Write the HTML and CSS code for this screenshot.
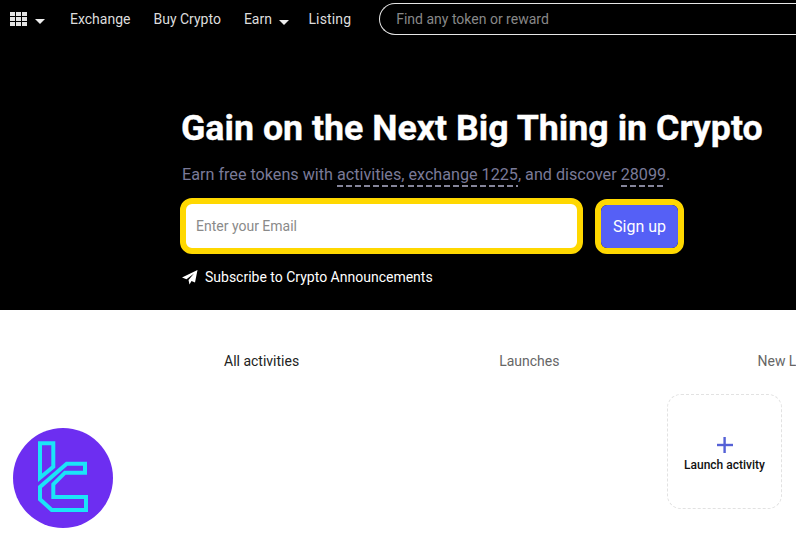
FILE: index.html
```html
<!DOCTYPE html>
<html lang="en">
<head>
    <meta charset="UTF-8">
    <meta name="viewport" content="width=device-width, initial-scale=1.0">
    <title>Gain on the Next Big Thing in Crypto</title>
    <link rel="stylesheet" href="styles.css">
</head>
<body>
    <div class="top">
        <nav class="nav">
            <div class="apps">
                <svg class="apps-icon" width="17" height="14" viewBox="0 0 17 14" fill="#e4e4e4">
                    <rect x="0" y="0" width="5" height="4"/><rect x="6" y="0" width="5" height="4"/><rect x="12" y="0" width="5" height="4"/>
                    <rect x="0" y="5" width="5" height="4"/><rect x="6" y="5" width="5" height="4"/><rect x="12" y="5" width="5" height="4"/>
                    <rect x="0" y="10" width="5" height="4"/><rect x="6" y="10" width="5" height="4"/><rect x="12" y="10" width="5" height="4"/>
                </svg>
                <span class="caret"></span>
            </div>
            <a class="nav-link nav-exchange">Exchange</a>
            <a class="nav-link nav-buy">Buy Crypto</a>
            <a class="nav-link nav-earn">Earn <span class="caret"></span></a>
            <a class="nav-link nav-listing">Listing</a>
            <div class="search">Find any token or reward</div>
        </nav>

        <section class="hero">
            <h1>Gain on the Next Big Thing in Crypto</h1>
            <p class="sub">Earn free tokens with <span class="dash">activities,</span> <span class="dash">exchange 1225</span>, and discover <span class="dash">28099</span>.</p>
            <form class="signup">
                <div class="email-box"><input class="email" type="text" placeholder="Enter your Email"></div>
                <div class="btn-box"><button class="btn" type="button">Sign up</button></div>
            </form>
            <div class="subscribe">
                <svg width="17" height="15" viewBox="0 0 17 15" fill="#fff">
                    <path d="M0 7.5 15.5 0 13 12.5 9.5 11 7.5 14.5 6.5 10 12 3.5 4.5 9.3Z"/>
                </svg>
                <span>Subscribe to Crypto Announcements</span>
            </div>
        </section>
    </div>

    <section class="main">
        <div class="tabs">
            <span class="tab tab-on">All activities</span>
            <span class="tab tab-launch">Launches</span>
            <span class="tab">New Listings</span>
        </div>
        <div class="card-row">
            <div class="launch-card">
                <svg width="16" height="16" viewBox="0 0 16 16" fill="#5561d6">
                    <rect x="6.4" y="0" width="2.4" height="16"/><rect x="0" y="6.8" width="16" height="2.4"/>
                </svg>
                <span>Launch activity</span>
            </div>
        </div>
    </section>

    <!-- watermark over page -->
    <div class="badge">
        <svg width="100" height="100" viewBox="0 0 100 100">
            <circle cx="50" cy="50" r="50" fill="#6d2ef1"/>
            <g fill="none" stroke="#1be4f8" stroke-width="4">
                <path d="M27 49.7V15.3H40.3V38.7Z"/>
                <path d="M72 35.7H53.7L27 59V71.3L38.7 82H73V69H40.3V56.3L52 44.7H72Z"/>
            </g>
        </svg>
    </div>
</body>
</html>
```

FILE: styles.css
```css
* {
    box-sizing: border-box;
}
html, body {
    height: 100%;
}
body {
    margin: 0;
    width: 796px;
    height: 540px;
    overflow: hidden;
    position: relative;
    font-family: Roboto, 'Liberation Sans', sans-serif;
    background: #fff;
}
.top {
    background: #000;
    color: #fff;
    height: 310px;
}
.nav {
    display: flex;
    align-items: center;
    height: 38px;
    padding-left: 10px;
    font-size: 14px;
    color: #ddd;
}
.apps {
    display: flex;
    align-items: center;
    margin-right: 25px;
}
.apps-icon {
    margin-right: 8px;
}
.caret {
    display: inline-block;
    width: 0;
    height: 0;
    margin-top: 5px;
    border-left: 5px solid transparent;
    border-right: 5px solid transparent;
    border-top: 5px solid #eee;
    vertical-align: middle;
}
.nav-link {
    margin-right: 23px;
    white-space: nowrap;
}
.nav-earn {
    margin-right: 19px;
}
.nav-earn .caret {
    margin-left: 4px;
}
.nav-listing {
    margin-right: 28px;
    letter-spacing: 0.15px;
}
.search {
    width: 440px;
    height: 32px;
    padding-left: 16px;
    line-height: 30px;
    border: 1px solid #e6e6e6;
    border-radius: 16px 0 0 16px;
    border-right: none;
    color: #888;
    flex: none;
}
.hero {
    padding: 70px 0 0 182px;
}
h1 {
    margin: 0 0 0 -1px;
    font-size: 35.75px;
    line-height: 40px;
    font-weight: 700;
    -webkit-text-stroke: 0.35px #fff;
}
.sub {
    margin: 15px 0 0;
    font-size: 16.16px;
    line-height: 24px;
    color: #7a7a98;
}
.dash {
    padding-bottom: 3px;
    background-image: linear-gradient(to right, #85859a 6px, transparent 6px);
    background-size: 9px 2px;
    background-position: 0 100%;
    background-repeat: repeat-x;
}
.signup {
    display: flex;
    align-items: flex-start;
    margin-top: 11px;
    margin-left: -2px;
}
.email-box {
    width: 403px;
    height: 56px;
    border: 6px solid #ffd800;
    border-radius: 12px;
    background: #fff;
    margin-right: 12px;
}
.email {
    display: block;
    width: 100%;
    height: 100%;
    border: none;
    outline: none;
    background: none;
    border-radius: 6px;
    padding: 0 10px;
    font-family: inherit;
    font-size: 14px;
}
.email::placeholder {
    color: #8a8a8a;
}
.btn-box {
    width: 89px;
    height: 55px;
    margin-top: 1px;
    border: 6px solid #ffd800;
    border-radius: 12px;
}
.btn {
    display: block;
    width: 100%;
    height: 100%;
    border: none;
    border-radius: 6px;
    background: #5560f6;
    color: #fff;
    font-family: inherit;
    font-size: 16px;
    padding: 0;
}
.subscribe {
    display: flex;
    align-items: center;
    gap: 6px;
    margin-top: 15px;
    font-size: 14px;
}
.main {
    height: 230px;
    overflow: hidden;
}
.tabs {
    display: flex;
    padding: 43px 0 0 224px;
    font-size: 14px;
    line-height: 16px;
    color: #666;
    white-space: nowrap;
}
.tab-on {
    color: #222;
    margin-right: 200px;
}
.tab-launch {
    margin-right: 198px;
}
.card-row {
    display: flex;
    padding: 25px 0 0 667px;
}
.launch-card {
    width: 115px;
    height: 115px;
    flex: none;
    padding-top: 5px;
    border: 1px dashed #e2e2e2;
    border-radius: 14px;
    display: flex;
    flex-direction: column;
    align-items: center;
    justify-content: center;
    gap: 5px;
    font-size: 12px;
    font-weight: 500;
    color: #111;
}
.badge {
    position: absolute;
    left: 13px;
    top: 428px;
    width: 100px;
    height: 100px;
}
```
